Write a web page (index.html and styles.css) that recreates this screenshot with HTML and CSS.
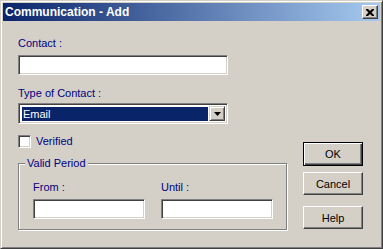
FILE: index.html
```html
<!DOCTYPE html>
<html lang="en">
<head>
    <meta charset="UTF-8">
    <title>Communication - Add</title>
    <link rel="stylesheet" href="styles.css">
</head>
<body>
    <div class="window">
        <div class="title-bar">
            <span class="title-text">Communication - Add</span>
            <button class="close-btn" aria-label="Close">
                <svg width="8" height="7" viewBox="0 0 8 7">
                    <path d="M0 0h2l2 2 2-2h2v1l-2.5 2.5L8 6v1H6L4 5 2 7H0V6l2.5-2.5L0 1z" fill="#000"/>
                </svg>
            </button>
        </div>
        <div class="dialog-body">
            <div class="form-column">
                <label class="field-label">Contact :</label>
                <div class="text-box wide"></div>

                <label class="field-label type-label">Type of Contact :</label>
                <div class="combo">
                    <span class="combo-value">Email</span>
                    <span class="combo-btn">
                        <svg width="7" height="4" viewBox="0 0 7 4"><path d="M0 0h7L3.5 4z" fill="#000"/></svg>
                    </span>
                </div>

                <div class="check-row">
                    <span class="check-box"></span>
                    <span class="check-label">Verified</span>
                </div>

                <fieldset class="group-box">
                    <legend>Valid Period</legend>
                    <div class="period-row">
                        <div class="period-field">
                            <label class="field-label">From :</label>
                            <div class="text-box"></div>
                        </div>
                        <div class="period-field">
                            <label class="field-label">Until :</label>
                            <div class="text-box"></div>
                        </div>
                    </div>
                </fieldset>
            </div>
            <div class="button-column">
                <button class="push-btn default">OK</button>
                <button class="push-btn">Cancel</button>
                <button class="push-btn help">Help</button>
            </div>
        </div>
    </div>
</body>
</html>
```

FILE: styles.css
```css
/* Global Styles */
* {
    margin: 0;
    padding: 0;
    box-sizing: border-box;
}

body {
    font-family: 'Liberation Sans', Arial, sans-serif;
    font-size: 11px;
    line-height: 13px;
    background-color: #d4d0c8;
}

/* Window frame */
.window {
    width: 383px;
    height: 249px;
    background-color: #d4d0c8;
    border: 1px solid;
    border-color: #d4d0c8 #404040 #404040 #d4d0c8;
    box-shadow: inset 1px 1px 0 #fff, inset -1px -1px 0 #808080;
    padding: 2px;
}

.title-bar {
    height: 18px;
    display: flex;
    align-items: center;
    justify-content: space-between;
    padding: 0 2px 0 2px;
    background: linear-gradient(to right, #0a246a, #a6caf0);
}

.title-text {
    color: #fff;
    font-weight: bold;
    font-size: 12px;
}

.close-btn {
    width: 16px;
    height: 14px;
    display: flex;
    align-items: center;
    justify-content: center;
    background-color: #d4d0c8;
    border: 1px solid;
    border-color: #fff #404040 #404040 #fff;
    box-shadow: inset -1px -1px 0 #808080;
}

/* Dialog body */
.dialog-body {
    display: flex;
    gap: 15px;
    padding: 16px 0 0 15px;
}

.form-column {
    width: 270px;
}

.field-label {
    display: block;
    color: #000080;
    margin-bottom: 5px;
}

.type-label {
    margin-top: 12px;
    margin-bottom: 3px;
}

/* Sunken text box */
.text-box {
    height: 20px;
    background-color: #fff;
    border: 1px solid;
    border-color: #808080 #fff #fff #808080;
    box-shadow: inset 1px 1px 0 #404040, inset -1px -1px 0 #d4d0c8;
}

.text-box.wide {
    width: 210px;
}

/* Combo box */
.combo {
    width: 210px;
    height: 21px;
    display: flex;
    background-color: #fff;
    border: 1px solid;
    border-color: #808080 #fff #fff #808080;
    box-shadow: inset 1px 1px 0 #404040, inset -1px -1px 0 #d4d0c8;
    padding: 2px;
}

.combo-value {
    flex: 1;
    margin: 1px 1px 0 1px;
    background-color: #0a246a;
    color: #fff;
    padding-left: 1px;
    line-height: 15px;
}

.combo-btn {
    width: 16px;
    display: flex;
    align-items: center;
    justify-content: center;
    background-color: #d4d0c8;
    border: 1px solid;
    border-color: #d4d0c8 #404040 #404040 #d4d0c8;
    box-shadow: inset 1px 1px 0 #fff, inset -1px -1px 0 #808080;
}

/* Checkbox */
.check-row {
    display: flex;
    align-items: center;
    gap: 5px;
    margin-top: 11px;
}

.check-box {
    width: 13px;
    height: 13px;
    background-color: #fff;
    border: 1px solid;
    border-color: #808080 #fff #fff #808080;
    box-shadow: inset 1px 1px 0 #404040, inset -1px -1px 0 #d4d0c8;
}

.check-label {
    color: #000080;
}

/* Group box */
.group-box {
    width: 269px;
    margin-top: 9px;
    border: 1px solid #808080;
    box-shadow: 1px 1px 0 #fff, inset 1px 1px 0 #fff;
    padding: 11px 13px 10px 14px;
}

.group-box legend {
    margin-left: -8px;
    padding: 0 2px;
    color: #000080;
    background-color: #d4d0c8;
}

.period-row {
    display: flex;
    gap: 16px;
}

.period-field {
    width: 112px;
}

/* Push buttons */
.button-column {
    display: flex;
    flex-direction: column;
    padding-top: 105px;
}

.push-btn {
    width: 60px;
    height: 23px;
    font-family: inherit;
    font-size: 11px;
    color: #000;
    background-color: #d4d0c8;
    border: 1px solid;
    border-color: #fff #404040 #404040 #fff;
    box-shadow: inset -1px -1px 0 #808080, inset 1px 1px 0 #d4d0c8;
    margin-bottom: 7px;
}

.push-btn.default {
    height: 24px;
    border: 1px solid #000;
    box-shadow: inset 1px 1px 0 #fff, inset -1px -1px 0 #404040, inset -2px -2px 0 #808080;
    margin-bottom: 6px;
}

.push-btn.help {
    margin-top: 4px;
}
```
